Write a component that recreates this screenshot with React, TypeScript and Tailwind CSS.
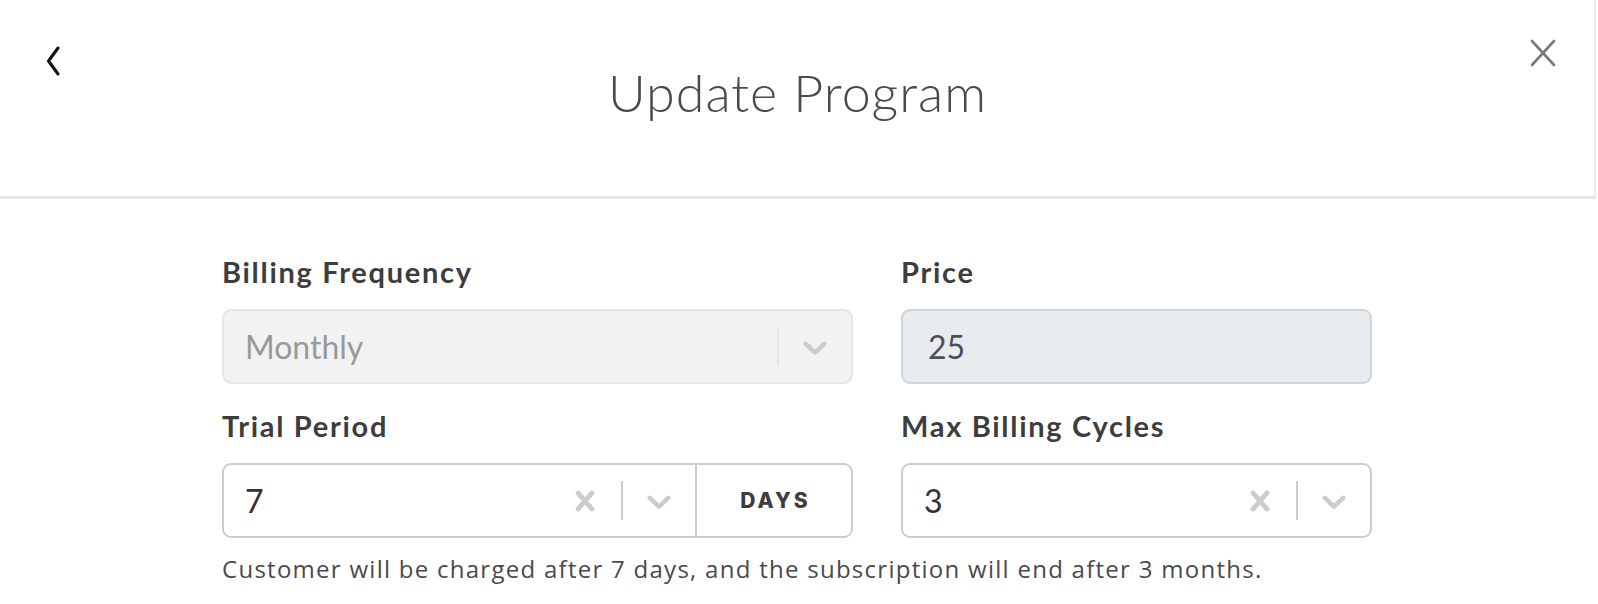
import React from "react";

const chevronPath =
  "M4.516 7.548c0.436-0.446 1.043-0.481 1.576 0l3.908 3.747 3.908-3.747c0.533-0.481 1.141-0.446 1.574 0 0.436 0.445 0.408 1.197 0 1.615-0.406 0.418-4.695 4.502-4.695 4.502-0.217 0.223-0.502 0.335-0.787 0.335s-0.57-0.112-0.789-0.335c0 0-4.287-4.084-4.695-4.502s-0.436-1.17 0-1.615z";
const crossPath =
  "M14.348 14.849c-0.469 0.469-1.229 0.469-1.697 0l-2.651-3.030-2.651 3.029c-0.469 0.469-1.229 0.469-1.697 0-0.469-0.469-0.469-1.229 0-1.697l2.758-3.15-2.759-3.152c-0.469-0.469-0.469-1.228 0-1.697s1.228-0.469 1.697 0l2.652 3.031 2.651-3.031c0.469-0.469 1.228-0.469 1.697 0s0.469 1.229 0 1.697l-2.758 3.152 2.758 3.15c0.469 0.469 0.469 1.229 0 1.698z";

function Icon({ d }: { d: string }) {
  return (
    <svg width="40" height="40" viewBox="0 0 20 20" className="fill-[#cccccc]">
      <path d={d} />
    </svg>
  );
}

function Indicators({ clear, sepColor }: { clear: boolean; sepColor: string }) {
  return (
    <div className="flex items-stretch self-stretch">
      {clear && (
        <div className="flex items-center p-4">
          <Icon d={crossPath} />
        </div>
      )}
      <span className={`w-[2px] my-4 ${sepColor}`} />
      <div className="flex items-center p-4">
        <Icon d={chevronPath} />
      </div>
    </div>
  );
}

const label =
  "block text-[29px] leading-[39px] font-bold tracking-[1.7px] text-[#3d3d3d] [font-family:Lato,sans-serif] mb-[18px]";

export default function App() {
  return (
    <div className="w-[1596px] h-[604px] bg-white [font-family:Lato,sans-serif] overflow-hidden">
      <header className="h-[199px] border-b-[3px] border-[#e6e6e6] border-r-2 border-r-[#ececec] grid grid-cols-[1fr_auto_1fr] pl-[45px] pr-[38px]">
        <div className="flex items-start">
          <button className="mt-[46px] ml-[1px]">
            <svg width="14" height="30" viewBox="0 0 14 30" fill="none">
              <path d="M12 2 L2.5 15 L12 28" stroke="#111" strokeWidth="3" strokeLinecap="round" strokeLinejoin="round" />
            </svg>
          </button>
        </div>
        <h1 className="mt-[61px] mr-[6px] text-[52px] leading-[62px] font-light text-[#4a4a4a] tracking-[1px] [font-family:Lato,sans-serif]">
          Update Program
        </h1>
        <div className="flex items-start justify-end">
          <button className="mt-[39px]">
            <svg width="26" height="28" viewBox="0 0 26 28" fill="none">
              <path d="M2 2 L24 26 M24 2 L2 26" stroke="#7a7a7a" strokeWidth="2.6" strokeLinecap="round" />
            </svg>
          </button>
        </div>
      </header>

      <main className="w-[1594px] pt-[53px]">
        <div className="w-[1150px] mx-auto">
          <div className="grid grid-cols-[631px_471px] gap-x-[48px] gap-y-[22px]">
            <div>
              <label className={label}>Billing Frequency</label>
              <div className="h-[75px] flex items-center rounded-[9px] border-2 border-[#e6e6e6] bg-[#f2f2f2]">
                <span className="flex-1 pl-[21px] text-[32px] text-[#999999] [font-family:Lato,sans-serif]">Monthly</span>
                <Indicators clear={false} sepColor="bg-[#e2e2e2]" />
              </div>
            </div>
            <div>
              <label className={label}>Price</label>
              <div className="h-[75px] flex items-center rounded-[9px] border-2 border-[#cfd4d9] bg-[#e9ecef]">
                <span className="pl-[25px] text-[32px] text-[#495057] [font-family:Lato,sans-serif]">25</span>
              </div>
            </div>
            <div>
              <label className={label}>Trial Period</label>
              <div className="h-[75px] flex items-stretch rounded-[9px] border-2 border-[#cccccc] bg-white">
                <div className="flex-1 flex items-center">
                  <span className="flex-1 pl-[21px] text-[32px] text-[#333333] [font-family:Lato,sans-serif]">7</span>
                  <Indicators clear={true} sepColor="bg-[#cccccc]" />
                </div>
                <div className="w-[156px] border-l-2 border-[#cccccc] flex items-center justify-center pl-[3px] text-[21px] font-extrabold tracking-[3px] text-[#3d3d3d] [font-family:Inter,sans-serif]">
                  DAYS
                </div>
              </div>
            </div>
            <div>
              <label className={label}>Max Billing Cycles</label>
              <div className="h-[75px] flex items-center rounded-[9px] border-2 border-[#cccccc] bg-white">
                <span className="flex-1 pl-[21px] text-[32px] text-[#333333] [font-family:Lato,sans-serif]">3</span>
                <Indicators clear={true} sepColor="bg-[#cccccc]" />
              </div>
            </div>
          </div>
          <p className="mt-[14px] text-[24px] leading-[33px] tracking-[1.27px] text-[#4a4a4a] [font-family:'Open_Sans',sans-serif]">
            Customer will be charged after 7 days, and the subscription will end after 3 months.
          </p>
        </div>
      </main>
    </div>
  );
}
